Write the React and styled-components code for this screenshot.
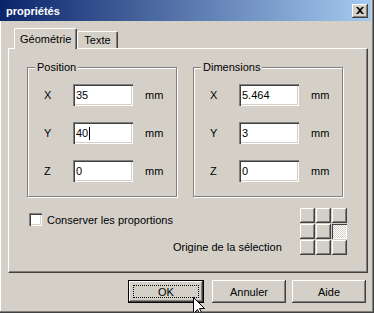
import React from 'react'
import styled, { createGlobalStyle } from 'styled-components'

const GlobalStyle = createGlobalStyle`
    body {
        margin: 0;
        background: #d4d0c8;
        font-family: "Liberation Sans", Arial, sans-serif;
        font-size: 11px;
        color: #000;
    }
`;

const Window = styled.div`
    position: relative;
    width: 374px;
    height: 313px;
    box-sizing: border-box;
    background: #d4d0c8;
    display: flex;
    flex-direction: column;
    border-right: 1px solid #404040;
    border-bottom: 1px solid #404040;
    box-shadow: inset -1px -1px 0 #808080, inset 1px 0 0 #fff;
    padding: 0 2px 2px 0;
    overflow: hidden;
    white-space: nowrap;
`;

const TitleBar = styled.div`
    height: 21px;
    flex-shrink: 0;
    display: flex;
    align-items: center;
    padding: 0 3px 0 6px;
    background: linear-gradient(to right, #0a246a, #a6caf0);
    color: #fff;
    font-weight: bold;
    font-size: 11px;
`;

const CloseButton = styled.div`
    margin-left: auto;
    width: 16px;
    height: 14px;
    display: flex;
    align-items: center;
    justify-content: center;
    background: #d4d0c8;
    box-shadow: inset -1px -1px 0 #404040, inset 1px 1px 0 #fff,
        inset -2px -2px 0 #808080, inset 2px 2px 0 #d4d0c8;
`;

const Body = styled.div`
    flex: 1;
    display: flex;
    flex-direction: column;
    padding: 7px 3px 0 8px;
`;

const TabStrip = styled.div`
    display: flex;
    align-items: flex-end;
    height: 20px;
    padding-left: 6px;
`;

const Tab = styled.div`
    position: relative;
    z-index: ${props => props.$active ? 1 : 0};
    height: ${props => props.$active ? 21 : 17}px;
    margin-bottom: ${props => props.$active ? -1 : 0}px;
    padding: 0 ${props => props.$active ? 5 : 6}px;
    box-sizing: border-box;
    display: flex;
    align-items: center;
    background: #d4d0c8;
    border-top: 1px solid #fff;
    border-left: 1px solid #fff;
    border-right: 1px solid #404040;
    border-radius: 2px 2px 0 0;
    box-shadow: inset -1px 0 0 #808080;
`;

const Panel = styled.div`
    height: 225px;
    box-sizing: border-box;
    border-top: 1px solid #fff;
    border-left: 1px solid #fff;
    border-right: 1px solid #404040;
    border-bottom: 1px solid #404040;
    box-shadow: inset -1px -1px 0 #808080;
    padding: 18px 22px 0 18px;
`;

const GroupRow = styled.div`
    display: grid;
    grid-template-columns: 150px 150px;
    gap: 16px;
`;

const GroupBox = styled.div`
    position: relative;
    height: 130px;
    box-sizing: border-box;
    border: 1px solid #808080;
    box-shadow: 1px 1px 0 #fff, inset 1px 1px 0 #fff;
    padding: 16px 0 0 16px;
    display: flex;
    flex-direction: column;
    gap: 16px;
`;

const Legend = styled.span`
    position: absolute;
    top: -7px;
    left: 7px;
    padding: 0 2px;
    line-height: 13px;
    background: #d4d0c8;
`;

const FieldRow = styled.div`
    display: grid;
    grid-template-columns: 29px 60px auto;
    align-items: center;
    height: 22px;
`;

const Unit = styled.span`
    margin-left: 12px;
`;

const Field = styled.div`
    height: 22px;
    box-sizing: border-box;
    display: flex;
    align-items: center;
    padding-left: 3px;
    background: #fff;
    box-shadow: inset 1px 1px 0 #808080, inset 2px 2px 0 #404040,
        inset -1px -1px 0 #fff, inset -2px -2px 0 #d4d0c8;
`;

const Caret = styled.span`
    display: inline-block;
    width: 1px;
    height: 13px;
    margin-left: 1px;
    background: #000;
`;

const LowerRow = styled.div`
    display: flex;
    justify-content: space-between;
    align-items: flex-start;
    margin-top: 11px;
`;

const CheckRow = styled.label`
    display: flex;
    align-items: center;
    gap: 5px;
    margin: 5px 0 0 2px;
`;

const CheckBox = styled.span`
    width: 13px;
    height: 13px;
    box-sizing: border-box;
    background: #fff;
    box-shadow: inset 1px 1px 0 #808080, inset 2px 2px 0 #404040,
        inset -1px -1px 0 #fff, inset -2px -2px 0 #d4d0c8;
`;

const OriginGroup = styled.div`
    display: flex;
    align-items: flex-end;
    gap: 18px;
`;

const OriginLabel = styled.span`
    line-height: 15px;
`;

const OriginGrid = styled.div`
    display: grid;
    grid-template-columns: repeat(3, 15px);
    grid-template-rows: repeat(3, 15px);
    gap: 1px;
`;

const OriginCell = styled.div`
    background: ${props => props.$selected
        ? 'repeating-conic-gradient(#fff 0 25%, #d4d0c8 0 50%) 0 0 / 2px 2px'
        : '#d4d0c8'};
    box-shadow: ${props => props.$selected
        ? 'inset 1px 1px 0 #404040, inset -1px -1px 0 #fff'
        : 'inset -1px -1px 0 #404040, inset 1px 1px 0 #fff, inset -2px -2px 0 #808080'};
`;

const ButtonRow = styled.div`
    display: flex;
    justify-content: flex-end;
    gap: 6px;
    margin-top: 7px;
    padding-right: 2px;
`;

const Button = styled.button`
    width: ${props => props.$default ? 76 : 74}px;
    height: 23px;
    margin-right: ${props => props.$default ? 2 : 0}px;
    box-sizing: border-box;
    padding: 0;
    display: flex;
    align-items: center;
    justify-content: center;
    font: inherit;
    color: #000;
    background: #d4d0c8;
    border: ${props => props.$default ? '1px solid #000' : 'none'};
    box-shadow: inset -1px -1px 0 #404040, inset 1px 1px 0 #fff,
        inset -2px -2px 0 #808080, inset 2px 2px 0 #d4d0c8;
`;

const FocusRing = styled.span`
    width: calc(100% - 8px);
    height: calc(100% - 8px);
    box-sizing: border-box;
    display: flex;
    align-items: center;
    justify-content: center;
    border: 1px dotted #000;
`;

const Pointer = styled.svg`
    position: absolute;
    left: 193px;
    top: 297px;
`;

const fields = {
    position: [['X', '35'], ['Y', '40', true], ['Z', '0']],
    dimensions: [['X', '5.464'], ['Y', '3'], ['Z', '0']],
};

const Group = ({title, rows}) => (
    <GroupBox>
        <Legend>{title}</Legend>
        {rows.map(([axis, value, caret]) => (
            <FieldRow key={axis}>
                <span>{axis}</span>
                <Field>{value}{caret && <Caret />}</Field>
                <Unit>mm</Unit>
            </FieldRow>
        ))}
    </GroupBox>
);

const App = () => (
    <Window>
        <GlobalStyle />
        <TitleBar>
            propriétés
            <CloseButton>
                <svg width="8" height="7" viewBox="0 0 8 7">
                    <path d="M0 0h2l2 2 2-2h2L5 3.5 8 7H6L4 5 2 7H0l3-3.5z" fill="#000" />
                </svg>
            </CloseButton>
        </TitleBar>
        <Body>
            <TabStrip>
                <Tab $active>Géométrie</Tab>
                <Tab>Texte</Tab>
            </TabStrip>
            <Panel>
                <GroupRow>
                    <Group title="Position" rows={fields.position} />
                    <Group title="Dimensions" rows={fields.dimensions} />
                </GroupRow>
                <LowerRow>
                    <CheckRow>
                        <CheckBox />
                        Conserver les proportions
                    </CheckRow>
                    <OriginGroup>
                        <OriginLabel>Origine de la sélection</OriginLabel>
                        <OriginGrid>
                            {[...Array(9)].map((_, i) => (
                                <OriginCell key={i} $selected={i === 5} />
                            ))}
                        </OriginGrid>
                    </OriginGroup>
                </LowerRow>
            </Panel>
            <ButtonRow>
                <Button $default><FocusRing>OK</FocusRing></Button>
                <Button>Annuler</Button>
                <Button>Aide</Button>
            </ButtonRow>
        </Body>
        <Pointer width="13" height="20" viewBox="0 0 13 20">
            <path d="M0.5 0.5V16.5L4.5 12.5L7.5 18.5L9.5 17.5L6.5 11.5H11.5Z" fill="#fff" stroke="#000" />
        </Pointer>
    </Window>
);

export default App;
